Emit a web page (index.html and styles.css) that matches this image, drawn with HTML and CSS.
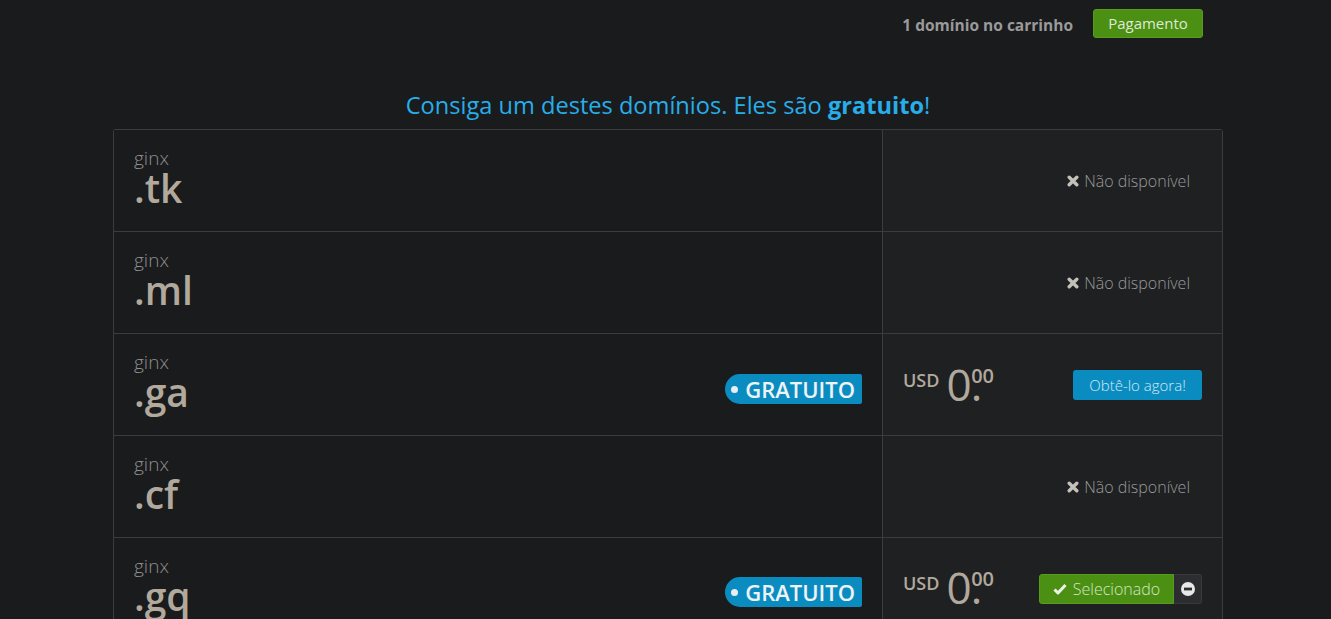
FILE: index.html
```html
<!DOCTYPE html>
<html lang="pt">
<head>
<meta charset="utf-8">
<title>Domínios</title>
<link rel="stylesheet" href="styles.css">
</head>
<body>
<div class="page">
  <header class="topbar">
    <span class="cart-count">1 domínio no carrinho</span>
    <a class="btn btn-green btn-pay" href="#">Pagamento</a>
  </header>

  <h2 class="title">Consiga um destes domínios. Eles são <strong>gratuito</strong>!</h2>

  <div class="table">
    <div class="row">
      <div class="cell-name">
        <div class="name"><span class="sld">ginx</span><span class="tld">.tk</span></div>
      </div>
      <div class="cell-action">
        <span class="unavail"><svg class="xicon" viewBox="0 0 12 12"><path d="M2.2 2.2 L9.8 9.8 M9.8 2.2 L2.2 9.8" stroke="currentColor" stroke-width="3.4" stroke-linecap="round"/></svg>Não disponível</span>
      </div>
    </div>
    <div class="row">
      <div class="cell-name">
        <div class="name"><span class="sld">ginx</span><span class="tld">.ml</span></div>
      </div>
      <div class="cell-action">
        <span class="unavail"><svg class="xicon" viewBox="0 0 12 12"><path d="M2.2 2.2 L9.8 9.8 M9.8 2.2 L2.2 9.8" stroke="currentColor" stroke-width="3.4" stroke-linecap="round"/></svg>Não disponível</span>
      </div>
    </div>
    <div class="row">
      <div class="cell-name">
        <div class="name"><span class="sld">ginx</span><span class="tld">.ga</span></div>
        <span class="tag">GRATUITO</span>
      </div>
      <div class="cell-action">
        <div class="price"><span class="cur">USD</span><span class="int">0.</span><span class="dec">00</span></div>
        <a class="btn btn-blue" href="#">Obtê-lo agora!</a>
      </div>
    </div>
    <div class="row">
      <div class="cell-name">
        <div class="name"><span class="sld">ginx</span><span class="tld">.cf</span></div>
      </div>
      <div class="cell-action">
        <span class="unavail"><svg class="xicon" viewBox="0 0 12 12"><path d="M2.2 2.2 L9.8 9.8 M9.8 2.2 L2.2 9.8" stroke="currentColor" stroke-width="3.4" stroke-linecap="round"/></svg>Não disponível</span>
      </div>
    </div>
    <div class="row">
      <div class="cell-name">
        <div class="name"><span class="sld">ginx</span><span class="tld">.gq</span></div>
        <span class="tag">GRATUITO</span>
      </div>
      <div class="cell-action">
        <div class="price"><span class="cur">USD</span><span class="int">0.</span><span class="dec">00</span></div>
        <div class="btn-group">
          <a class="btn btn-green btn-sel" href="#"><svg class="check" viewBox="0 0 14 12"><path d="M1.5 6.5 L5 10 L12.5 2" fill="none" stroke="currentColor" stroke-width="3" stroke-linejoin="round"/></svg>Selecionado</a>
          <a class="btn btn-dark" href="#"><svg class="minus" viewBox="0 0 14 14"><circle cx="7" cy="7" r="7" fill="#e8e8e8"/><rect x="3" y="5.6" width="8" height="2.8" fill="#2c2d30"/></svg></a>
        </div>
      </div>
    </div>
  </div>
</div>
</body>
</html>
```
FILE: styles.css
```css
html, body {
  margin: 0;
  padding: 0;
  background: #1a1b1d;
  font-family: "Open Sans", "Noto Sans", sans-serif;
  color: #999;
  overflow: hidden;
}

.page {
  width: 1110px;
  margin: 0 auto;
  padding-left: 5px;
}

.topbar {
  display: flex;
  justify-content: flex-end;
  align-items: center;
  gap: 20px;
  padding: 8px 20px 0 0;
  height: 30px;
}

.cart-count {
  font-size: 15.5px;
  font-weight: 700;
  color: #9a9a9a;
  padding-top: 4px;
}

.btn {
  display: inline-flex;
  align-items: center;
  justify-content: center;
  text-decoration: none;
  border-radius: 3px;
  font-size: 14px;
  height: 29px;
  box-sizing: border-box;
  padding: 0 12px;
}

.btn-green {
  background: #4b9012;
  color: #dfe8d5;
  border: 1px solid #579b1f;
}

.btn-pay {
  width: 110px;
  font-size: 15px;
}

.title {
  margin: 52px 0 9px;
  text-align: center;
  font-size: 23.6px;
  font-weight: 400;
  color: #27aeea;
  line-height: 30px;
}
.title strong { font-weight: 700; }

.table {
  border: 1px solid #3b3c3f;
  border-radius: 3px;
  border-bottom: none;
}

.row {
  display: grid;
  grid-template-columns: 769px 1fr;
  height: 102px;
  border-bottom: 1px solid #3b3c3f;
  box-sizing: border-box;
}
.row:last-child { height: 101px; }

.cell-name {
  display: flex;
  align-items: flex-end;
  justify-content: space-between;
  padding: 0 20px;
  background: #1a1b1d;
  border-right: 1px solid #3b3c3f;
}

.name {
  display: flex;
  flex-direction: column;
  align-self: flex-start;
  padding-top: 17px;
}

.sld {
  font-size: 19px;
  font-weight: 300;
  color: #8e8e8e;
  line-height: 22px;
}

.tld {
  font-size: 39px;
  font-weight: 600;
  color: #b2a99d;
  line-height: 40px;
  margin-top: -1px;
}

.tag {
  position: relative;
  display: inline-flex;
  align-items: center;
  height: 30px;
  margin-bottom: 31px;
  padding: 0 7px 0 20px;
  background: #0b8cc1;
  color: #eef3f6;
  font-size: 22px;
  font-weight: 600;
  border-radius: 15px 2px 2px 15px;
}
.tag::before {
  content: "";
  position: absolute;
  left: 6px;
  top: 12px;
  width: 7px;
  height: 7px;
  border-radius: 50%;
  background: #e8eef2;
}

.cell-action {
  display: flex;
  align-items: center;
  justify-content: space-between;
  padding: 0 20px;
  background: #1f2022;
}

.unavail {
  margin-left: auto;
  margin-right: 12px;
  display: inline-flex;
  align-items: center;
  font-size: 16px;
  font-weight: 300;
  color: #9a9a9a;
}
.xicon {
  width: 12px;
  height: 12px;
  margin-right: 5px;
  color: #c4c0ba;
}

.price {
  display: flex;
  align-items: flex-start;
  color: #b2a99d;
  padding-top: 4px;
}
.cur {
  font-size: 18px;
  font-weight: 600;
  line-height: 24px;
  margin-top: 2px;
  margin-right: 7px;
}
.int {
  font-size: 44px;
  line-height: 48px;
  font-weight: 400;
  letter-spacing: -1px;
  margin-top: -6px;
}
.dec {
  font-size: 20px;
  font-weight: 600;
  line-height: 24px;
  margin-left: -10px;
  margin-top: -2px;
}

.btn-blue {
  background: #0b8cc1;
  color: #d7e9f3;
  font-weight: 300;
  font-size: 15px;
  width: 129px;
  height: 30px;
  padding: 0;
  margin-top: 1px;
}

.btn-group {
  display: flex;
  margin-top: 1px;
}
.btn-sel {
  width: 135px;
  height: 30px;
  padding: 0;
  font-weight: 300;
  font-size: 16px;
  border-radius: 3px 0 0 3px;
  color: #d6e5c6;
}
.check {
  width: 14px;
  height: 12px;
  margin-right: 6px;
  color: #eef3ea;
}
.btn-dark {
  width: 28px;
  height: 30px;
  padding: 0;
  background: #2c2d30;
  border: 1px solid #38393c;
  border-left: none;
  border-radius: 0 3px 3px 0;
}
.minus {
  width: 14px;
  height: 14px;
}
```
